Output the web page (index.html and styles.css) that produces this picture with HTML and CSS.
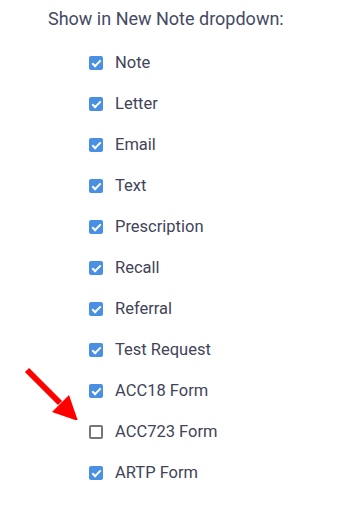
FILE: index.html
```html
<!DOCTYPE html>
<html lang="en">
<head>
	<meta charset="UTF-8">
	<title>New Note dropdown</title>
	<link rel="stylesheet" href="styles.css">
</head>
<body>
    <div class="panel">
        <div class="title">Show in New Note dropdown:</div>
        <ul class="opts">
            <li class="opt"><span class="cb on"></span>Note</li>
            <li class="opt"><span class="cb on"></span>Letter</li>
            <li class="opt"><span class="cb on"></span>Email</li>
            <li class="opt"><span class="cb on"></span>Text</li>
            <li class="opt"><span class="cb on"></span>Prescription</li>
            <li class="opt"><span class="cb on"></span>Recall</li>
            <li class="opt"><span class="cb on"></span>Referral</li>
            <li class="opt"><span class="cb on"></span>Test Request</li>
            <li class="opt"><span class="cb on"></span>ACC18 Form</li>
            <li class="opt"><span class="cb"></span>ACC723 Form</li>
            <li class="opt"><span class="cb on"></span>ARTP Form</li>
        </ul>
        <svg class="arrow" width="60" height="60" viewBox="0 0 60 60">
            <line x1="7" y1="10" x2="40" y2="43" stroke="#ff0000" stroke-width="6"/>
            <polygon points="58,61 32,52 49,35" fill="#ff0000"/>
        </svg>
    </div>
</body>
</html>
```

FILE: styles.css
```css
body{
    margin: 0;
    background: #fff;
    font-family: Roboto, "Liberation Sans", sans-serif;
}
.panel{
    position: relative;
    width: 342px;
    height: 510px;
}
.title{
    padding: 8px 0 0 48px;
    font-size: 18px;
    line-height: 22px;
    color: #444a64;
}
.opts{
    list-style: none;
    margin: 0;
    padding: 12px 0 0 89px;
}
.opt{
    display: flex;
    align-items: center;
    height: 41px;
    font-size: 16.5px;
    color: #3f4459;
}
.cb{
    box-sizing: border-box;
    width: 14px;
    height: 14px;
    margin-right: 12px;
    border: 2px solid #767676;
    border-radius: 2px;
    background: #fff;
    position: relative;
}
.cb.on{
    border: none;
    background: #4a90e2;
}
.cb.on::after{
    content: "";
    position: absolute;
    left: 5px;
    top: 2px;
    width: 3px;
    height: 7px;
    border: solid #fff;
    border-width: 0 2px 2px 0;
    transform: rotate(45deg);
}
.arrow{
    position: absolute;
    left: 20px;
    top: 360px;
}
```
